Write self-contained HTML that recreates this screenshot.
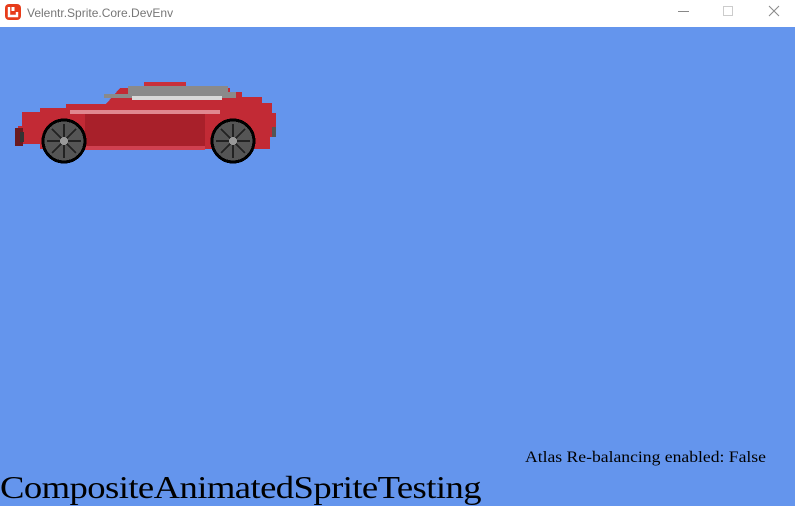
<!DOCTYPE html>
<html><head><style>
body{margin:0;width:795px;height:504px;overflow:hidden;background:#6495ed;position:relative;font-family:"Liberation Serif",serif}
#tb{position:absolute;left:0;top:0;width:795px;height:27px;background:#fff}
#tb .t{position:absolute;left:27px;top:6px;font:12px "Liberation Sans",sans-serif;color:#777}
.a{position:absolute;white-space:nowrap;color:#000;transform-origin:0 0}
</style></head><body>
<div id="tb">
<svg style="position:absolute;left:5px;top:4px" width="16" height="16"><rect x="0" y="0" width="16" height="16" rx="4" fill="#e73c1a"/><path d="M4 3v9h8V8" stroke="#fff" stroke-width="2.4" fill="none"/><rect x="6.5" y="3" width="3" height="4" fill="#fff"/></svg>
<div class="t">Velentr.Sprite.Core.DevEnv</div>
<svg style="position:absolute;left:670px;top:0" width="125" height="27"><line x1="8" y1="11.5" x2="19" y2="11.5" stroke="#888"/><rect x="53.5" y="6.5" width="9" height="9" fill="none" stroke="#ccc"/><path d="M99 6l10 10M109 6l-10 10" stroke="#888"/></svg>
</div>
<svg style="position:absolute;left:0;top:0" width="300" height="180" shape-rendering="crispEdges">
<rect x="144" y="82" width="42" height="4" fill="#c8303a"/>
<path d="M120 88h110v4h12v5h20v6h10v10h4v24h-6v12H40v-5H18v-18h4v-14h18v-4h26v-4h40z" fill="#c22a35"/>
<path d="M128 86h100v6h8v6H104v-4h24z" fill="#8a8a8a"/>
<rect x="132" y="96" width="90" height="4" fill="#d8d8d8"/>
<rect x="85" y="114" width="120" height="32" fill="#a8202a"/>
<rect x="70" y="110" width="150" height="4" fill="#e08890"/>
<rect x="85" y="146" width="120" height="4" fill="#d04050"/>
<rect x="15" y="128" width="8" height="18" fill="#6a1a1f"/>
<rect x="20" y="132" width="4" height="10" fill="#333"/>
<rect x="272" y="127" width="4" height="10" fill="#555"/>
<g fill="#555" stroke="#000" stroke-width="3"><circle cx="64" cy="141" r="21"/><circle cx="233" cy="141" r="21"/></g>
<g stroke="#222" stroke-width="2"><path d="M64 124v34M47 141h34M52 129l24 24M76 129l-24 24M233 124v34M216 141h34M221 129l24 24M245 129l-24 24"/></g>
<circle cx="64" cy="141" r="4" fill="#999"/><circle cx="233" cy="141" r="4" fill="#999"/>
</svg>
<div class="a" style="left:525px;top:449px;font-size:16px;transform:scaleX(1.1)">Atlas Re-balancing enabled: False</div>
<div class="a" style="left:0;top:469px;font-size:32px;letter-spacing:-0.5px;transform:scaleX(1.145)">CompositeAnimatedSpriteTesting</div>
</body></html>
